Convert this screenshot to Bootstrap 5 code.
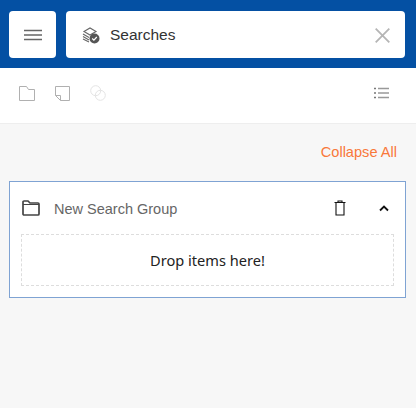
<!DOCTYPE html>
<html lang="en">
<head>
  <meta charset="UTF-8">
  <meta name="viewport" content="width=device-width, initial-scale=1.0">
  <title>Searches</title>
  <link href="https://cdn.jsdelivr.net/npm/bootstrap@5.3.0/dist/css/bootstrap.min.css" rel="stylesheet">
  <style>
    body {
      background: #f7f7f7;
      font-family: "Liberation Sans", Arial, sans-serif;
      height: 408px;
      overflow: hidden;
    }
    .top-bar {
      background: #0450a3;
      height: 68px;
      padding: 11px 11px 10px 9px;
      gap: 10px;
    }
    .menu-btn {
      width: 47px;
      height: 47px;
      background: #fff;
      border-radius: 4px;
    }
    .search-box {
      height: 47px;
      background: #fff;
      border-radius: 4px;
      padding: 1px 15px 0 16px;
      font-size: 15.5px;
      color: #333;
    }
    .search-title { margin-left: 10px; }
    .tool-bar {
      height: 56px;
      background: #fff;
      border-bottom: 1px solid #eee;
      padding: 0 27px 5px 19px;
      gap: 20px;
    }
    .collapse-row {
      height: 57px;
      padding: 0 19px 0 0;
      font-size: 14.6px;
      color: #f9783a;
    }
    .group-box {
      margin: 0 10px 0 9px;
      height: 117px;
      background: #fff;
      border: 1px solid #7fa3d3;
      padding: 0 11px;
    }
    .group-head {
      height: 52px;
      padding: 0 5px 0 1px;
    }
    .group-name {
      font-size: 14.5px;
      color: #666;
      margin-left: 14px;
      padding-top: 3px;
    }
    .drop-zone {
      height: 52px;
      border: 1px dashed #ddd;
      padding-top: 2px;
      font-family: "Noto Sans", sans-serif;
      font-size: 14.6px;
      color: #222;
    }
    .chevron-icon { margin-left: 33px; }
  </style>
</head>
<body>

<div class="top-bar d-flex">
  <div class="menu-btn d-flex align-items-center justify-content-center">
    <svg width="18" height="12" viewBox="0 0 18 12"><path d="M0 1.500h18M0 6h18M0 10.500h18" stroke="#666" stroke-width="1.600" fill="none"/></svg>
  </div>
  <div class="search-box flex-grow-1 d-flex align-items-center">
    <svg width="18" height="18" viewBox="0 0 18 18" fill="none">
      <path d="M2 5.500 8 2l6 3.500-6 3.500z" stroke="#666" stroke-width="1.100"/>
      <path d="M1 8l6 3.500M1 10.500l6 3.500M1 13l6 3" stroke="#666" stroke-width="1.100"/>
      <circle cx="12.500" cy="12.500" r="5" fill="#555"/>
      <path d="M10.200 12.500l1.700 1.700 2.900-3.200" stroke="#fff" stroke-width="1.200"/>
    </svg>
    <span class="search-title flex-grow-1">Searches</span>
    <svg width="15" height="15" viewBox="0 0 15 15"><path d="M.7.700l13.600 13.600M14.300.700.700 14.300" stroke="#b5b5b5" stroke-width="1.800" fill="none"/></svg>
  </div>
</div>

<div class="tool-bar d-flex align-items-center">
  <svg width="16" height="15" viewBox="0 0 16 15" fill="none"><path d="M.5.500h7l2 3h6v11H.5z" stroke="#b0b0b0"/></svg>
  <svg width="15" height="15" viewBox="0 0 15 15" fill="none"><path d="M.5.500h14v14H5.500l-5-5zM.5 9.500h5v5" stroke="#b0b0b0"/></svg>
  <svg width="16" height="16" viewBox="0 0 16 16" fill="none"><circle cx="5.700" cy="5.700" r="5" stroke="#e4e4e4"/><circle cx="10.300" cy="10.300" r="5" stroke="#e4e4e4"/></svg>
  <svg class="ms-auto" width="15" height="12" viewBox="0 0 15 12" fill="none"><path d="M4 1.500h11M4 6h11M4 10.500h11" stroke="#999" stroke-width="1.600"/><path d="M0 1.500h2M0 6h2M0 10.500h2" stroke="#777" stroke-width="1.600"/></svg>
</div>

<div class="collapse-row d-flex align-items-center justify-content-end">Collapse All</div>

<div class="group-box">
  <div class="group-head d-flex align-items-center">
    <svg width="18" height="16" viewBox="0 0 18 16" fill="none"><path d="M1 3.500V2a1 1 0 0 1 1-1h4l2 2h8a1 1 0 0 1 1 1v10a1 1 0 0 1-1 1H2a1 1 0 0 1-1-1z" stroke="#444" stroke-width="1.700"/><path d="M1 4.500h16" stroke="#444"/></svg>
    <span class="group-name flex-grow-1">New Search Group</span>
    <svg width="12" height="16" viewBox="0 0 12 16" fill="none"><path d="M.5 2.500h11M4 2.500V1h4v1.500M2 3v12h8V3" stroke="#111" stroke-width="1.100"/></svg>
    <svg class="chevron-icon" width="10" height="7" viewBox="0 0 10 7" fill="none"><path d="M1 5.500l4-4 4 4" stroke="#111" stroke-width="1.800"/></svg>
  </div>
  <div class="drop-zone d-flex align-items-center justify-content-center">Drop items here!</div>
</div>

</body>
</html>
